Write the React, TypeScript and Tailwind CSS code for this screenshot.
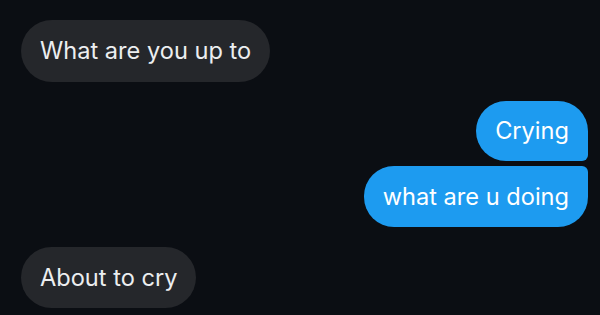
export default function App() {
  return (
    <div className="w-[600px] h-[315px] overflow-hidden bg-[#0b0e13] pt-[20px] pl-[21px] pr-[12px] font-['Inter',sans-serif] text-[23.6px] text-[#eceef0]">
      <div className="flex flex-col">
        {/* incoming */}
        <div className="self-start h-[62px] flex items-center px-[19px] rounded-full bg-[#25272b]">
          What are you up to
        </div>

        {/* outgoing group */}
        <div className="self-end mt-[19px] h-[60px] flex items-center px-[19px] rounded-[30px] rounded-br-[6px] bg-[#1d9bf0] text-white">
          Crying
        </div>
        <div className="self-end mt-[5px] h-[61px] flex items-center px-[19px] rounded-[30px] rounded-tr-[6px] bg-[#1d9bf0] text-white">
          what are u doing
        </div>

        <div className="self-start mt-[20px] h-[61px] flex items-center px-[19px] rounded-full bg-[#25272b]">
          About to cry
        </div>
      </div>
    </div>
  );
}
